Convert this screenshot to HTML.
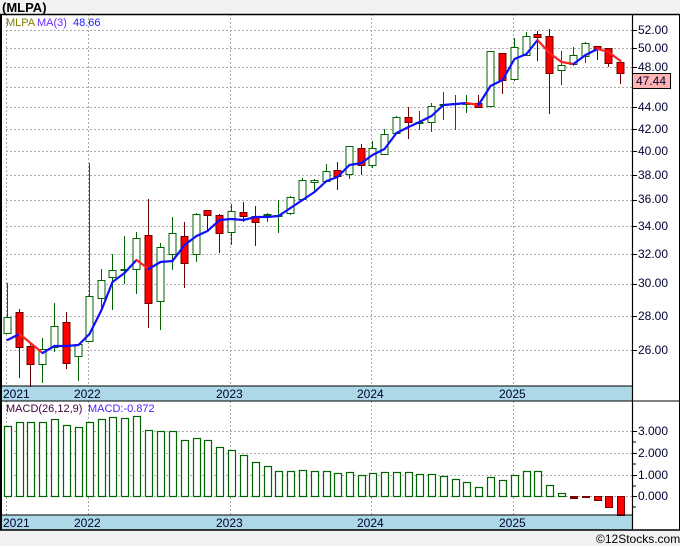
<!DOCTYPE html>
<html><head><meta charset="utf-8">
<style>
html,body{margin:0;padding:0;background:#f2f2f2;width:680px;height:546px;overflow:hidden}
svg{display:block}
text{font-family:"Liberation Sans",sans-serif}
</style></head><body>
<svg id="s" width="680" height="546" xmlns="http://www.w3.org/2000/svg">
<rect x="0" y="0" width="680" height="546" fill="#f2f2f2"/>
<rect x="0" y="14" width="680" height="516" fill="#fff"/>
<g id="grid"></g>
<rect x="0" y="386" width="632" height="15" fill="#add8e6"/>
<rect x="0" y="515" width="632" height="15" fill="#add8e6"/>
<g id="plot"></g>
<line x1="0" y1="14.5" x2="680" y2="14.5" stroke="#000" stroke-width="1.5"/>
<line x1="0" y1="386" x2="632" y2="386" stroke="#000" stroke-width="1"/>
<line x1="0" y1="401" x2="680" y2="401" stroke="#000" stroke-width="1"/>
<line x1="0" y1="515" x2="632" y2="515" stroke="#000" stroke-width="1"/>
<line x1="0" y1="530" x2="680" y2="530" stroke="#000" stroke-width="1.5"/>
<line x1="632.5" y1="14" x2="632.5" y2="530" stroke="#000" stroke-width="1.2"/>
<line x1="1" y1="14" x2="1" y2="530" stroke="#000" stroke-width="2"/>
<line x1="679.5" y1="14" x2="679.5" y2="530" stroke="#000" stroke-width="1"/>
<g id="ticks"></g>
<text x="2" y="12" font-size="13" font-weight="bold" fill="#000">(MLPA)</text>
<text x="6" y="26" font-size="11" fill="#808000">MLPA</text>
<text x="37" y="26" font-size="11" fill="#6a2cff">MA(3)</text>
<text x="73" y="26" font-size="11" fill="#2020ff">48.66</text>
<text x="6" y="412" font-size="11" fill="#400040">MACD(26,12,9)</text>
<text x="88" y="412" font-size="11" fill="#5020ff">MACD:-0.872</text>
<g font-size="12" fill="#000033">
<text x="638" y="34">52.00</text>
<text x="638" y="52">50.00</text>
<text x="638" y="71">48.00</text>
<text x="638" y="111">44.00</text>
<text x="638" y="133">42.00</text>
<text x="638" y="155">40.00</text>
<text x="638" y="179">38.00</text>
<text x="638" y="203">36.00</text>
<text x="638" y="230">34.00</text>
<text x="638" y="258">32.00</text>
<text x="638" y="287">30.00</text>
<text x="638" y="320">28.00</text>
<text x="638" y="354">26.00</text>
<text x="638" y="435">3.000</text>
<text x="638" y="457">2.000</text>
<text x="638" y="479">1.000</text>
<text x="638" y="500">0.000</text>
</g>
<rect x="632.5" y="73.5" width="38" height="15" fill="#ffb4b4" stroke="#000" stroke-width="1"/>
<text x="636" y="85" font-size="12" fill="#000033">47.44</text>
<g font-size="12" fill="#000033">
<text x="3" y="398">2021</text><text x="74" y="398">2022</text><text x="216" y="398">2023</text><text x="357" y="398">2024</text><text x="499" y="398">2025</text>
<text x="3" y="527">2021</text><text x="74" y="527">2022</text><text x="216" y="527">2023</text><text x="357" y="527">2024</text><text x="499" y="527">2025</text>
</g>
<text x="596" y="543" font-size="12" fill="#000">©12Stocks.com</text>
</svg>
<script>
var NS="http://www.w3.org/2000/svg";
function el(p,t,a){var e=document.createElementNS(NS,t);for(var k in a)e.setAttribute(k,a[k]);document.getElementById(p).appendChild(e);return e;}
function Y(p){return 30+461.7*(Math.log(52)-Math.log(p));}
var g=[52,50,48,46,44,42,40,38,36,34,32,30,28,26];
g.forEach(function(p){var y=Math.round(Y(p))+.5;el("grid","line",{x1:6,x2:632,y1:y,y2:y,stroke:"#aaa","stroke-dasharray":"2,2"});el("ticks","line",{x1:632,x2:637,y1:y,y2:y,stroke:"#000"});});
[431,453,475,496].forEach(function(y){y+=.5;el("grid","line",{x1:6,x2:632,y1:y,y2:y,stroke:"#aaa","stroke-dasharray":"2,2"});el("ticks","line",{x1:632,x2:637,y1:y,y2:y,stroke:"#000"});});
[442,464,486,507].forEach(function(y){el("ticks","line",{x1:632,x2:636,y1:y,y2:y,stroke:"#000"});});
[6,88,230,371,513].forEach(function(x){x+=.5;el("grid","line",{x1:x,x2:x,y1:14,y2:386,stroke:"#aaa","stroke-dasharray":"2,2"});el("grid","line",{x1:x,x2:x,y1:401,y2:515,stroke:"#aaa","stroke-dasharray":"2,2"});});
// x, high, bodyTop, bodyBot, low, red?
var C=[[7,283,317,333,334,0],[19,309,312,347,378,1],[30,343,346,364,387,1],[42,338,349,364,383,0],[54,303,326,347,352,0],[66,312,322,363,369,1],[78,344,344,356,381,0],[89,163,296,341,341,0],[101,269,280,298,311,0],[112,254,270,277,310,0],[124,236,269,270,284,0],[136,232,238,269,294,0],[148,199,235,303,328,1],[160,243,247,301,330,0],[172,217,233,254,270,0],[184,222,236,263,288,1],[196,213,214,254,262,0],[207,210,210,215,230,1],[219,214,215,233,253,1],[231,204,211,232,245,0],[243,202,212,216,222,1],[255,206,216,222,246,1],[267,213,214,215,222,0],[278,200,215,216,233,0],[290,196,197,213,215,0],[302,178,180,199,199,0],[314,179,180,182,193,0],[326,164,171,181,182,0],[337,162,170,176,190,1],[349,146,146,174,179,0],[361,144,148,165,175,1],[372,141,148,165,168,0],[384,129,134,154,155,0],[396,116,117,133,133,0],[408,107,117,122,139,1],[419,111,122,123,130,0],[431,103,106,122,132,0],[443,92,104,104,120,0],[455,95,103,104,130,0],[466,95,103,104,113,0],[478,95,103,107,108,1],[490,51,51,106,107,0],[502,53,53,80,94,1],[514,38,47,79,81,0],[526,32,36,55,55,0],[537,31,34,37,61,1],[549,29,36,73,114,1],[561,51,65,70,85,0],[573,47,55,64,66,0],[585,42,43,56,63,0],[597,46,46,49,60,1],[608,48,48,63,67,1],[620,62,62,73,84,1]];
C.forEach(function(c){var col=c[5]?"#6b0000":"#006400";
el("plot","line",{x1:c[0]+.5,x2:c[0]+.5,y1:c[1],y2:c[4],stroke:col,"stroke-width":1});
var h=Math.max(1,c[3]-c[2]);
el("plot","rect",{x:c[0]-3,y:c[2]+.5,width:7,height:h,fill:c[5]?"#ff0000":"#fff",stroke:col,"stroke-width":1});});
var M=[340,334,343,353,346,346,345,334,310,282,273,260,269,262,261,245,236,231,220,219,220,217,217,216,208,200,192,181,177,165,163,155,149,133,127,122,116,105,104,103,105,86,80,59,54,40,53,62,64,55,49,52,61];
for(var i=0;i<M.length-1;i++){var red=M[i+1]>M[i]+1;el("plot","line",{x1:C[i][0]+.5,y1:M[i],x2:C[i+1][0]+.5,y2:M[i+1],stroke:red?"#ff2020":"#1010ff","stroke-width":2.2,"stroke-linecap":"round"});}
var D=[426,422,422,422,419,425,427,422,419,417,418,416,430,431,431,440,438,440,447,450,455,462,466,471,471,470,471,471,473,472,475,473,472,472,472,474,474,476,479,482,487,477,480,475,471,471,485,493,498,497,500,507,515];
D.forEach(function(t,i){var x=C[i][0]-3;var neg=t>496;
if(neg){el("plot","rect",{x:x+.5,y:496.5,width:7,height:Math.max(1,t-496),fill:i<50?"#7a0000":"#ff0000",stroke:"#7a0000","stroke-width":1});}
else el("plot","rect",{x:x+.5,y:t+.5,width:7,height:496-t,fill:"#fff",stroke:"#006400","stroke-width":1.2});});
</script>
</body></html>
